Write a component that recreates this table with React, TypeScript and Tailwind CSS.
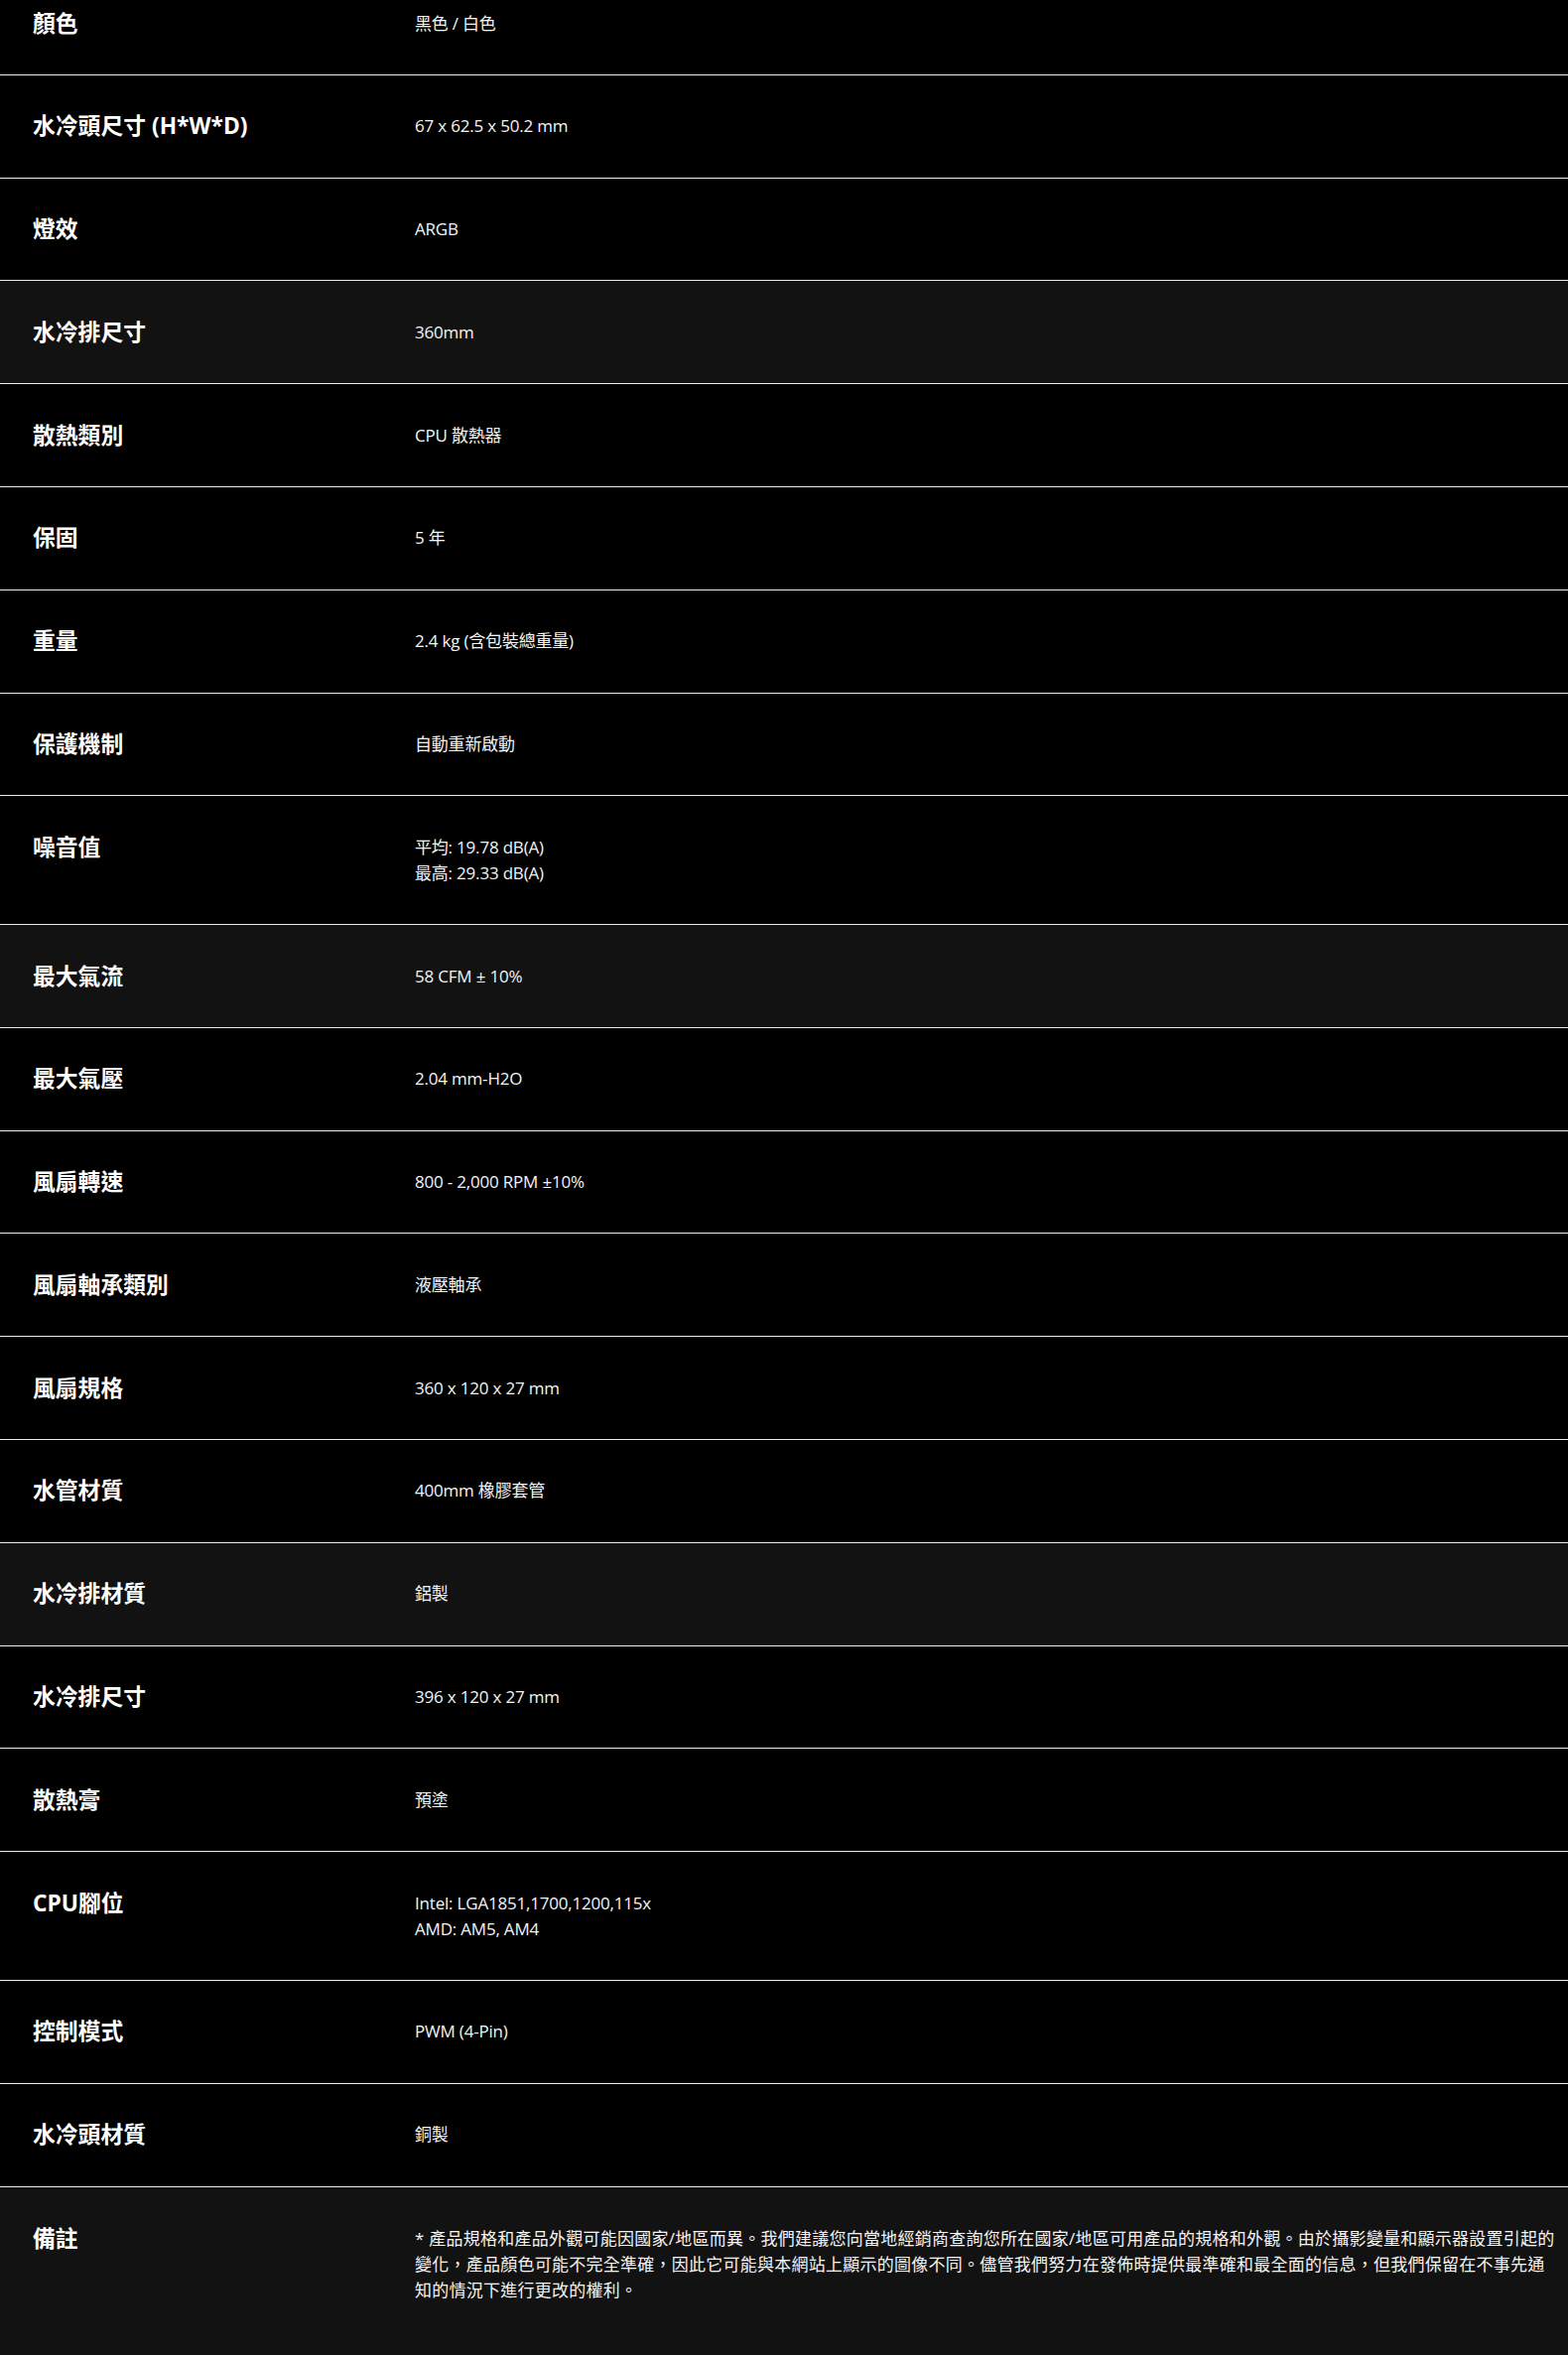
import React from "react";

type Row = { label: string; value: string[]; gray?: boolean; note?: boolean };

const rows: Row[] = [
  { label: "顏色", value: ["黑色 / 白色"] },
  { label: "水冷頭尺寸 (H*W*D)", value: ["67 x 62.5 x 50.2 mm"] },
  { label: "燈效", value: ["ARGB"] },
  { label: "水冷排尺寸", value: ["360mm"], gray: true },
  { label: "散熱類別", value: ["CPU 散熱器"] },
  { label: "保固", value: ["5 年"] },
  { label: "重量", value: ["2.4 kg (含包裝總重量)"] },
  { label: "保護機制", value: ["自動重新啟動"] },
  { label: "噪音值", value: ["平均: 19.78 dB(A)", "最高: 29.33 dB(A)"] },
  { label: "最大氣流", value: ["58 CFM ± 10%"], gray: true },
  { label: "最大氣壓", value: ["2.04 mm-H2O"] },
  { label: "風扇轉速", value: ["800 - 2,000 RPM ±10%"] },
  { label: "風扇軸承類別", value: ["液壓軸承"] },
  { label: "風扇規格", value: ["360 x 120 x 27 mm"] },
  { label: "水管材質", value: ["400mm 橡膠套管"] },
  { label: "水冷排材質", value: ["鋁製"], gray: true },
  { label: "水冷排尺寸", value: ["396 x 120 x 27 mm"] },
  { label: "散熱膏", value: ["預塗"] },
  { label: "CPU腳位", value: ["Intel: LGA1851,1700,1200,115x", "AMD: AM5, AM4"] },
  { label: "控制模式", value: ["PWM (4-Pin)"] },
  { label: "水冷頭材質", value: ["銅製"] },
  {
    label: "備註",
    value: [
      "* 產品規格和產品外觀可能因國家/地區而異。我們建議您向當地經銷商查詢您所在國家/地區可用產品的規格和外觀。由於攝影變量和顯示器設置引起的變化，產品顏色可能不完全準確，因此它可能與本網站上顯示的圖像不同。儘管我們努力在發佈時提供最準確和最全面的信息，但我們保留在不事先通知的情況下進行更改的權利。",
    ],
    gray: true,
    note: true,
  },
];

const labelFont = { fontFamily: '"Open Sans", "Noto Sans CJK TC", sans-serif' };
const valueFont = { fontFamily: '"Open Sans", "Noto Sans CJK TC", sans-serif' };

export default function App() {
  return (
    <div className="flex min-h-[2373px] w-[1580px] flex-col bg-black text-white">
      {rows.map((r, i) => {
        const first = i === 0;
        const last = i === rows.length - 1;
        return (
          <div
            key={i}
            className={`grid grid-cols-[385px_1fr] pl-[33px] pr-[10px] ${
              r.gray ? "bg-[#121212]" : "bg-black"
            } ${last ? "flex-1 pt-[39px] pb-[40px]" : "border-b border-[#ececec]"} ${
              first ? "pt-[10.5px] pb-[38.4px]" : last ? "" : "py-[38.4px]"
            }`}
          >
            <div
              className="text-[22.8px] font-bold leading-[26px] text-white"
              style={labelFont}
            >
              {r.label}
            </div>
            <div
              className={`text-[17px] leading-[26px] text-[#f4f4f4] ${
                r.note ? "tracking-[0.25px]" : "tracking-[-0.2px]"
              }`}
              style={valueFont}
            >
              {r.value.map((v, j) => (
                <div key={j}>{v}</div>
              ))}
            </div>
          </div>
        );
      })}
    </div>
  );
}
